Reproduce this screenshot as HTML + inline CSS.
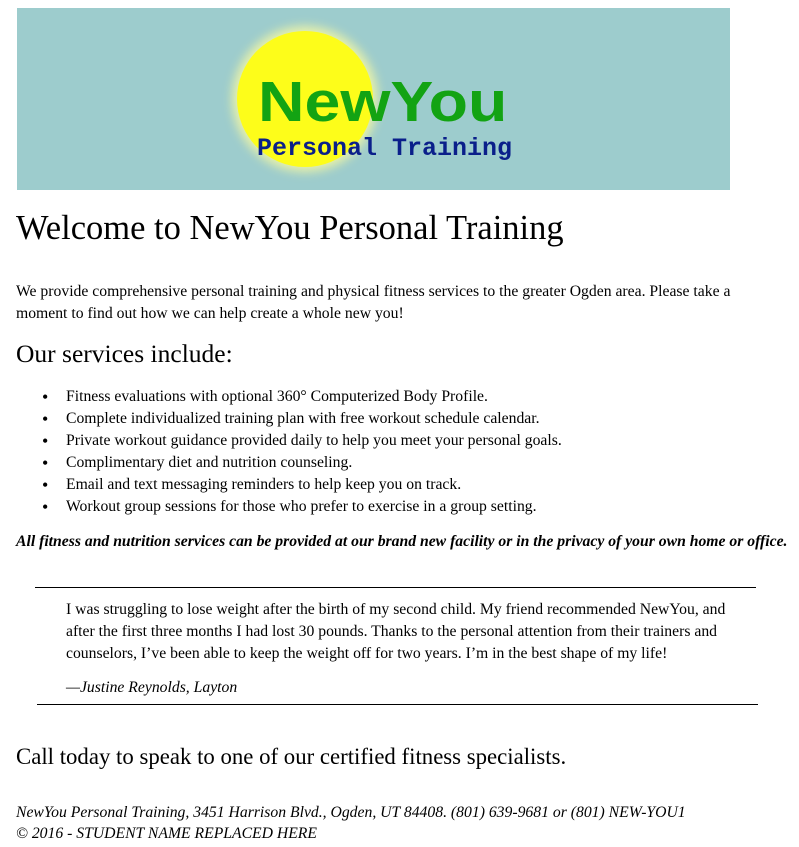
<!DOCTYPE html>
<html><head><meta charset="utf-8"><style>
body{margin:0;background:#fff;font-family:"Liberation Serif",serif;color:#000;width:799px;height:847px;position:relative;overflow:hidden}
.a{position:absolute;white-space:nowrap}
.p{font-size:15.7px;line-height:22px}
.li{position:absolute;left:66px;font-size:15.7px;line-height:22px;white-space:nowrap}
.li:before{content:"•";position:absolute;left:-24px;font-size:18px}
</style></head><body>
<div class="a" style="left:17px;top:8px;width:713px;height:182px;background:#9dcccd;overflow:hidden">
  <div style="position:absolute;left:220px;top:23px;width:136px;height:136px;border-radius:50%;background:#fdfd1a;box-shadow:0 0 10px 5px rgba(250,250,160,0.8)"></div>
  <div class="a" style="left:241px;top:66px;font-family:'Liberation Sans',sans-serif;font-weight:bold;font-size:57px;line-height:56px;color:#13a313;transform:scaleX(1.13);transform-origin:0 0">NewYou</div>
  <div class="a" style="left:240px;top:126px;font-family:'Liberation Mono',monospace;font-weight:bold;font-size:25px;line-height:30px;color:#0a1f8a">Personal Training</div>
</div>
<div class="a" style="left:16px;top:207px;font-size:34.5px;line-height:42px">Welcome to NewYou Personal Training</div>
<div class="a p" style="left:16px;top:281px">We provide comprehensive personal training and physical fitness services to the greater Ogden area. Please take a<br>moment to find out how we can help create a whole new you!</div>
<div class="a" style="left:16px;top:338px;font-size:25.5px;line-height:32px">Our services include:</div>
<div class="li" style="top:386px">Fitness evaluations with optional 360° Computerized Body Profile.</div>
<div class="li" style="top:408px">Complete individualized training plan with free workout schedule calendar.</div>
<div class="li" style="top:430px">Private workout guidance provided daily to help you meet your personal goals.</div>
<div class="li" style="top:452px">Complimentary diet and nutrition counseling.</div>
<div class="li" style="top:474px">Email and text messaging reminders to help keep you on track.</div>
<div class="li" style="top:496px">Workout group sessions for those who prefer to exercise in a group setting.</div>
<div class="a p" style="left:16px;top:531px;font-weight:bold;font-style:italic">All fitness and nutrition services can be provided at our brand new facility or in the privacy of your own home or office.</div>
<div class="a" style="left:35px;top:587px;width:721px;height:1px;background:#000"></div>
<div class="a p" style="left:66px;top:599px">I was struggling to lose weight after the birth of my second child. My friend recommended NewYou, and<br>after the first three months I had lost 30 pounds. Thanks to the personal attention from their trainers and<br>counselors, I’ve been able to keep the weight off for two years. I’m in the best shape of my life!</div>
<div class="a p" style="left:66px;top:677px;font-style:italic">—Justine Reynolds, Layton</div>
<div class="a" style="left:37px;top:704px;width:721px;height:1px;background:#000"></div>
<div class="a" style="left:16px;top:743px;font-size:22.8px;line-height:28px">Call today to speak to one of our certified fitness specialists.</div>
<div class="a p" style="left:16px;top:802px;font-style:italic;line-height:21px">NewYou Personal Training, 3451 Harrison Blvd., Ogden, UT 84408. (801) 639-9681 or (801) NEW-YOU1<br>© 2016 - STUDENT NAME REPLACED HERE</div>
</body></html>
